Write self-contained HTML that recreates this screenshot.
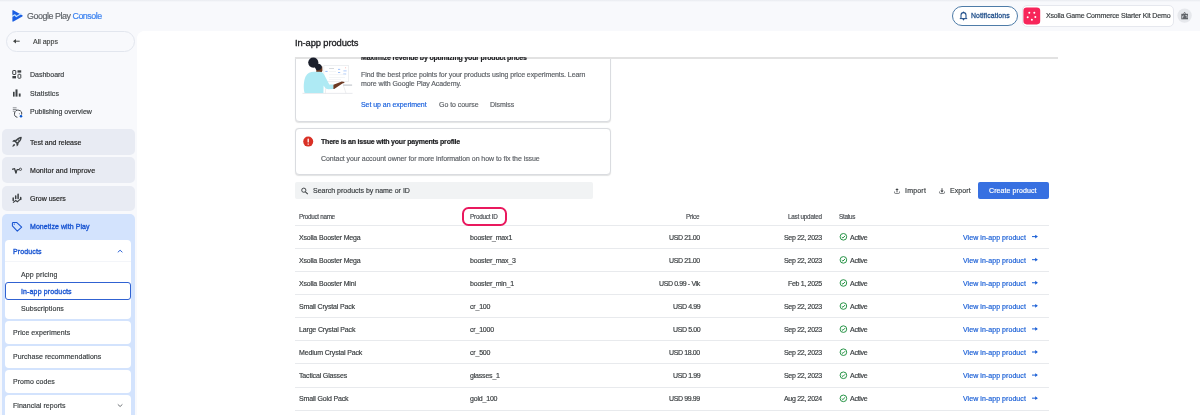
<!DOCTYPE html>
<html><head><meta charset="utf-8">
<style>
html,body{margin:0;padding:0;}
body{width:1200px;height:415px;overflow:hidden;position:relative;background:#f8f9fc;font-family:"Liberation Sans", sans-serif;}
.r{position:absolute;}
.t{position:absolute;white-space:nowrap;line-height:1;will-change:transform;-webkit-text-stroke:0.18px currentColor;}
svg.r{will-change:transform;}
</style></head><body>
<div class="r" style="left:0.00px;top:0.00px;width:1200.00px;height:2.00px;background:linear-gradient(#e9ebf0,#f8f9fc);"></div>
<div class="t" style="left:27.00px;top:11.67px;font-size:8.9px;color:#5f6368;font-weight:400;letter-spacing:-0.45px;">Google Play <span style="color:#3b82f0">Console</span></div>
<div class="r" style="left:6.00px;top:31.00px;width:128.50px;height:20.50px;border:1px solid #e2e6ee;border-radius:11px;box-sizing:border-box;"></div>
<div class="t" style="left:33.00px;top:38.07px;font-size:7px;color:#444746;font-weight:400;letter-spacing:0px;">All apps</div>
<div class="t" style="left:30.00px;top:70.82px;font-size:7px;color:#3c4043;font-weight:400;letter-spacing:0px;">Dashboard</div>
<div class="t" style="left:30.00px;top:89.77px;font-size:7px;color:#3c4043;font-weight:400;letter-spacing:0.1px;">Statistics</div>
<div class="t" style="left:30.00px;top:107.97px;font-size:7px;color:#3c4043;font-weight:400;letter-spacing:0px;">Publishing overview</div>
<div class="r" style="left:2.00px;top:129.00px;width:132.60px;height:26.40px;background:#e8ebf3;border-radius:5px;"></div>
<div class="r" style="left:2.00px;top:157.20px;width:132.60px;height:25.60px;background:#e8ebf3;border-radius:5px;"></div>
<div class="r" style="left:2.00px;top:185.50px;width:132.60px;height:25.50px;background:#e8ebf3;border-radius:5px;"></div>
<div class="r" style="left:2.00px;top:213.50px;width:132.60px;height:216.50px;background:#d3e3fd;border-radius:5px;"></div>
<div class="t" style="left:29.60px;top:138.87px;font-size:7px;color:#1f1f1f;font-weight:400;letter-spacing:0px;">Test and release</div>
<div class="t" style="left:29.60px;top:166.87px;font-size:7px;color:#1f1f1f;font-weight:400;letter-spacing:0.07px;">Monitor and improve</div>
<div class="t" style="left:29.60px;top:194.87px;font-size:7px;color:#1f1f1f;font-weight:400;letter-spacing:0px;">Grow users</div>
<div class="t" style="left:29.60px;top:223.07px;font-size:7px;color:#1a56d2;font-weight:400;letter-spacing:0.07px;-webkit-text-stroke:0.34px #1a56d2;">Monetize with Play</div>
<div class="r" style="left:5.40px;top:240.00px;width:125.20px;height:79.00px;background:#fff;border-radius:4px;"></div>
<div class="t" style="left:13.20px;top:248.07px;font-size:7px;color:#1a56d2;font-weight:400;letter-spacing:0.13px;-webkit-text-stroke:0.34px #1a56d2;">Products</div>
<div class="r" style="left:5.40px;top:261.00px;width:125.20px;height:1.00px;background:#f3f5f9;"></div>
<div class="t" style="left:20.60px;top:271.27px;font-size:7px;color:#3c4043;font-weight:400;letter-spacing:0.14px;">App pricing</div>
<div class="r" style="left:4.70px;top:282.40px;width:126.70px;height:17.80px;border:1.5px solid #3062d2;border-radius:3px;box-sizing:border-box;background:#fff;"></div>
<div class="t" style="left:20.60px;top:287.87px;font-size:7px;color:#1a56d2;font-weight:400;letter-spacing:0.14px;-webkit-text-stroke:0.34px #1a56d2;">In-app products</div>
<div class="t" style="left:20.60px;top:304.87px;font-size:7px;color:#3c4043;font-weight:400;letter-spacing:0.07px;">Subscriptions</div>
<div class="r" style="left:5.40px;top:321.10px;width:125.20px;height:22.80px;background:#fff;border-radius:4px;"></div>
<div class="t" style="left:13.00px;top:328.87px;font-size:7px;color:#3c4043;font-weight:400;letter-spacing:0.08px;">Price experiments</div>
<div class="r" style="left:5.40px;top:345.60px;width:125.20px;height:22.70px;background:#fff;border-radius:4px;"></div>
<div class="t" style="left:13.00px;top:353.27px;font-size:7px;color:#3c4043;font-weight:400;letter-spacing:0.05px;">Purchase recommendations</div>
<div class="r" style="left:5.40px;top:370.30px;width:125.20px;height:22.40px;background:#fff;border-radius:4px;"></div>
<div class="t" style="left:13.00px;top:377.67px;font-size:7px;color:#3c4043;font-weight:400;letter-spacing:0.06px;">Promo codes</div>
<div class="r" style="left:5.40px;top:394.70px;width:125.20px;height:35.30px;background:#fff;border-radius:4px;"></div>
<div class="t" style="left:13.00px;top:401.77px;font-size:7px;color:#3c4043;font-weight:400;letter-spacing:0.05px;">Financial reports</div>
<div class="r" style="left:952.00px;top:6.00px;width:66.00px;height:19.70px;border:1px solid #4e7ca8;border-radius:10px;box-sizing:border-box;background:#fff;"></div>
<div class="t" style="left:971.00px;top:12.56px;font-size:6.9px;color:#1f4e8a;font-weight:400;letter-spacing:0.09px;-webkit-text-stroke:0.28px #1f4e8a;">Notifications</div>
<div class="r" style="left:1021.60px;top:5.00px;width:152.40px;height:21.60px;border:1px solid #e6e8ee;border-radius:5px;box-sizing:border-box;background:#fff;"></div>
<div class="t" style="left:1045.80px;top:12.37px;font-size:7px;color:#3c4043;font-weight:400;letter-spacing:-0.15px;">Xsolla Game Commerce Starter Kit Demo</div>
<div class="r" style="left:137.00px;top:31.00px;width:1063.00px;height:389.00px;background:#fff;border-top-left-radius:8px;"></div>
<div class="r" style="left:294.50px;top:40.00px;width:316.00px;height:81.50px;border:1px solid #dadce0;border-radius:4px;box-sizing:border-box;background:#fff;box-shadow:0 0.5px 1px rgba(60,64,67,0.15);z-index:1;"></div>
<svg class="r" style="left:0;top:0;z-index:3" width="1200" height="415" viewBox="0 0 1200 415">
<line x1="302.5" y1="93.4" x2="352.5" y2="93.4" stroke="#e3e5e8" stroke-width="0.8"/>
<rect x="323.9" y="65.6" width="24.7" height="16.1" fill="#fff" stroke="#e6e8eb" stroke-width="0.7"/>
<rect x="329" y="68.1" width="5" height="0.9" fill="#d3d6da"/>
<rect x="325.3" y="70.9" width="2.3" height="0.9" fill="#8ab4f8"/>
<rect x="338" y="68.9" width="2.2" height="0.8" fill="#8ab4f8"/>
<rect x="343.4" y="70.4" width="3.2" height="1" fill="#aecbfa"/>
<rect x="338" y="72.2" width="2.2" height="0.8" fill="#8ab4f8"/>
<rect x="343.2" y="73.5" width="3" height="1" fill="#aecbfa"/>
<rect x="329" y="71" width="7" height="0.6" fill="#eceef1"/>
<rect x="329" y="74.5" width="16" height="0.6" fill="#eceef1"/>
<rect x="329" y="77" width="16" height="0.6" fill="#eceef1"/>
<rect x="329" y="79.3" width="12" height="0.6" fill="#eceef1"/>
<circle cx="345.6" cy="67.8" r="0.5" fill="#f6aea9"/>
<path d="M326 81.7 L325.4 93.3 M343.6 86 L346 93.3" stroke="#e0e2e6" stroke-width="0.6"/>
<rect x="343" y="84.3" width="9.1" height="1.7" fill="#d5d8dc"/>
<path d="M316.5 66 L322.3 66.5 L322.4 71 L320.8 73 L316.2 72.5 Z" fill="#6d3a23"/>
<path d="M304.6 93 C303.2 88 303.6 81 305.6 76.5 C307.4 73 310.5 71.8 314 71.8 L319.6 71.8 C322.3 72 323.4 73 324.6 75.6 L329.3 84.6 L333.6 84.6 L333.6 89 L328.3 89.2 C326.8 89.2 325.6 88.4 324.8 87.2 L323.6 85.4 L323.4 93 Z" fill="#aeeaf4"/>
<path d="M333.4 84.7 L341.8 81.6 L344.6 81.9 L344.1 82.9 L342.4 83.6 L334.2 89 L333.4 89 Z" fill="#6d3a23"/>
<circle cx="313.3" cy="62.6" r="5.1" fill="#1a1f2c"/>
<path d="M313.5 65 C316 63.3 319.5 63.5 321.2 65.2 C322.2 66.5 322 68.2 320.6 69.2 C319.2 70.4 317.4 70.6 316.3 70 Z" fill="#1a1f2c"/>
</svg>
<div class="t" style="left:361.00px;top:54.07px;font-size:7px;color:#202124;font-weight:700;letter-spacing:-0.18px;z-index:3;">Maximize revenue by optimizing your product prices</div>
<div class="t" style="left:361.00px;top:71.07px;font-size:7px;color:#5f6368;font-weight:400;letter-spacing:-0.08px;z-index:3;">Find the best price points for your products using price experiments. Learn</div>
<div class="t" style="left:361.00px;top:80.47px;font-size:7px;color:#5f6368;font-weight:400;letter-spacing:-0.08px;z-index:3;">more with Google Play Academy.</div>
<div class="t" style="left:361.00px;top:101.07px;font-size:7px;color:#1b62dd;font-weight:400;letter-spacing:-0.05px;z-index:3;">Set up an experiment</div>
<div class="t" style="left:438.60px;top:101.07px;font-size:7px;color:#5f6368;font-weight:400;letter-spacing:-0.05px;z-index:3;">Go to course</div>
<div class="t" style="left:490.30px;top:101.07px;font-size:7px;color:#5f6368;font-weight:400;letter-spacing:-0.05px;z-index:3;">Dismiss</div>
<div class="r" style="left:294.50px;top:128.30px;width:316.00px;height:46.50px;border:1px solid #dadce0;border-radius:4px;box-sizing:border-box;background:#fff;box-shadow:0 0.5px 1px rgba(60,64,67,0.15);z-index:1;"></div>
<div class="t" style="left:321.20px;top:137.87px;font-size:7px;color:#202124;font-weight:700;letter-spacing:-0.2px;z-index:3;">There is an issue with your payments profile</div>
<div class="t" style="left:321.20px;top:155.37px;font-size:7px;color:#5f6368;font-weight:400;letter-spacing:-0.06px;z-index:3;">Contact your account owner for more information on how to fix the issue</div>
<div class="r" style="left:137.00px;top:31.00px;width:1063.00px;height:25.80px;background:#fff;z-index:4;border-top-left-radius:8px;"></div>
<div class="t" style="left:295.00px;top:38.04px;font-size:9.4px;color:#202124;font-weight:400;letter-spacing:-0.12px;z-index:5;-webkit-text-stroke:0.3px #202124;">In-app products</div>
<div class="r" style="left:295.00px;top:57.00px;width:763.20px;height:2.00px;background:#e2e2e2;z-index:2;"></div>
<div class="r" style="left:295.00px;top:182.30px;width:298.00px;height:16.30px;background:#f1f3f4;border-radius:2px;"></div>
<div class="t" style="left:312.80px;top:187.07px;font-size:7px;color:#3c4043;font-weight:400;letter-spacing:0px;">Search products by name or ID</div>
<div class="t" style="left:904.70px;top:187.07px;font-size:7px;color:#3c4043;font-weight:400;letter-spacing:0.2px;">Import</div>
<div class="t" style="left:949.70px;top:187.07px;font-size:7px;color:#3c4043;font-weight:400;letter-spacing:0.1px;">Export</div>
<div class="r" style="left:978.20px;top:182.00px;width:70.50px;height:16.80px;background:#3770e1;border-radius:2px;"></div>
<div class="t" style="left:989.00px;top:187.07px;font-size:7px;color:#fff;font-weight:400;letter-spacing:0.09px;">Create product</div>
<div class="t" style="left:298.70px;top:213.67px;font-size:6.3px;color:#4a4e53;font-weight:400;letter-spacing:-0.28px;">Product name</div>
<div class="t" style="left:470.00px;top:213.67px;font-size:6.3px;color:#4a4e53;font-weight:400;letter-spacing:-0.21px;">Product ID</div>
<div class="t" style="right:500.20px;top:213.67px;font-size:6.3px;color:#4a4e53;font-weight:400;letter-spacing:-0.2px;">Price</div>
<div class="t" style="right:378.00px;top:213.67px;font-size:6.3px;color:#4a4e53;font-weight:400;letter-spacing:-0.22px;">Last updated</div>
<div class="t" style="left:839.30px;top:213.67px;font-size:6.3px;color:#4a4e53;font-weight:400;letter-spacing:-0.28px;">Status</div>
<div class="r" style="left:295.00px;top:225.00px;width:753.60px;height:1.00px;background:#e8eaed;"></div>
<div class="r" style="left:462.00px;top:207.20px;width:44.80px;height:19.30px;border:2px solid #e9195e;border-radius:6.5px;box-sizing:border-box;z-index:2;"></div>
<div class="t" style="left:298.70px;top:233.67px;font-size:7px;color:#3c4043;font-weight:400;letter-spacing:-0.16px;">Xsolla Booster Mega</div>
<div class="t" style="left:470.00px;top:233.67px;font-size:7px;color:#3c4043;font-weight:400;letter-spacing:-0.19px;">booster_max1</div>
<div class="t" style="right:499.90px;top:233.67px;font-size:7px;color:#3c4043;font-weight:400;letter-spacing:-0.38px;">USD 21.00</div>
<div class="t" style="right:378.00px;top:233.67px;font-size:7px;color:#3c4043;font-weight:400;letter-spacing:-0.31px;">Sep 22, 2023</div>
<div class="t" style="left:849.80px;top:233.67px;font-size:7px;color:#3c4043;font-weight:400;letter-spacing:-0.27px;">Active</div>
<div class="t" style="left:963.00px;top:233.67px;font-size:7px;color:#1a5fd6;font-weight:400;letter-spacing:0.06px;">View in-app product</div>
<div class="r" style="left:295.00px;top:248.08px;width:753.60px;height:1.00px;background:#e8eaed;"></div>
<div class="t" style="left:298.70px;top:256.75px;font-size:7px;color:#3c4043;font-weight:400;letter-spacing:-0.16px;">Xsolla Booster Mega</div>
<div class="t" style="left:470.00px;top:256.75px;font-size:7px;color:#3c4043;font-weight:400;letter-spacing:-0.19px;">booster_max_3</div>
<div class="t" style="right:499.90px;top:256.75px;font-size:7px;color:#3c4043;font-weight:400;letter-spacing:-0.38px;">USD 21.00</div>
<div class="t" style="right:378.00px;top:256.75px;font-size:7px;color:#3c4043;font-weight:400;letter-spacing:-0.31px;">Sep 22, 2023</div>
<div class="t" style="left:849.80px;top:256.75px;font-size:7px;color:#3c4043;font-weight:400;letter-spacing:-0.27px;">Active</div>
<div class="t" style="left:963.00px;top:256.75px;font-size:7px;color:#1a5fd6;font-weight:400;letter-spacing:0.06px;">View in-app product</div>
<div class="r" style="left:295.00px;top:271.16px;width:753.60px;height:1.00px;background:#e8eaed;"></div>
<div class="t" style="left:298.70px;top:279.83px;font-size:7px;color:#3c4043;font-weight:400;letter-spacing:-0.16px;">Xsolla Booster Mini</div>
<div class="t" style="left:470.00px;top:279.83px;font-size:7px;color:#3c4043;font-weight:400;letter-spacing:-0.19px;">booster_min_1</div>
<div class="t" style="right:499.90px;top:279.83px;font-size:7px;color:#3c4043;font-weight:400;letter-spacing:-0.38px;">USD 0.99 - Vik</div>
<div class="t" style="right:378.00px;top:279.83px;font-size:7px;color:#3c4043;font-weight:400;letter-spacing:-0.31px;">Feb 1, 2025</div>
<div class="t" style="left:849.80px;top:279.83px;font-size:7px;color:#3c4043;font-weight:400;letter-spacing:-0.27px;">Active</div>
<div class="t" style="left:963.00px;top:279.83px;font-size:7px;color:#1a5fd6;font-weight:400;letter-spacing:0.06px;">View in-app product</div>
<div class="r" style="left:295.00px;top:294.24px;width:753.60px;height:1.00px;background:#e8eaed;"></div>
<div class="t" style="left:298.70px;top:302.91px;font-size:7px;color:#3c4043;font-weight:400;letter-spacing:-0.16px;">Small Crystal Pack</div>
<div class="t" style="left:470.00px;top:302.91px;font-size:7px;color:#3c4043;font-weight:400;letter-spacing:-0.19px;">cr_100</div>
<div class="t" style="right:499.90px;top:302.91px;font-size:7px;color:#3c4043;font-weight:400;letter-spacing:-0.38px;">USD 4.99</div>
<div class="t" style="right:378.00px;top:302.91px;font-size:7px;color:#3c4043;font-weight:400;letter-spacing:-0.31px;">Sep 22, 2023</div>
<div class="t" style="left:849.80px;top:302.91px;font-size:7px;color:#3c4043;font-weight:400;letter-spacing:-0.27px;">Active</div>
<div class="t" style="left:963.00px;top:302.91px;font-size:7px;color:#1a5fd6;font-weight:400;letter-spacing:0.06px;">View in-app product</div>
<div class="r" style="left:295.00px;top:317.32px;width:753.60px;height:1.00px;background:#e8eaed;"></div>
<div class="t" style="left:298.70px;top:325.99px;font-size:7px;color:#3c4043;font-weight:400;letter-spacing:-0.16px;">Large Crystal Pack</div>
<div class="t" style="left:470.00px;top:325.99px;font-size:7px;color:#3c4043;font-weight:400;letter-spacing:-0.19px;">cr_1000</div>
<div class="t" style="right:499.90px;top:325.99px;font-size:7px;color:#3c4043;font-weight:400;letter-spacing:-0.38px;">USD 5.00</div>
<div class="t" style="right:378.00px;top:325.99px;font-size:7px;color:#3c4043;font-weight:400;letter-spacing:-0.31px;">Sep 22, 2023</div>
<div class="t" style="left:849.80px;top:325.99px;font-size:7px;color:#3c4043;font-weight:400;letter-spacing:-0.27px;">Active</div>
<div class="t" style="left:963.00px;top:325.99px;font-size:7px;color:#1a5fd6;font-weight:400;letter-spacing:0.06px;">View in-app product</div>
<div class="r" style="left:295.00px;top:340.40px;width:753.60px;height:1.00px;background:#e8eaed;"></div>
<div class="t" style="left:298.70px;top:349.07px;font-size:7px;color:#3c4043;font-weight:400;letter-spacing:-0.16px;">Medium Crystal Pack</div>
<div class="t" style="left:470.00px;top:349.07px;font-size:7px;color:#3c4043;font-weight:400;letter-spacing:-0.19px;">cr_500</div>
<div class="t" style="right:499.90px;top:349.07px;font-size:7px;color:#3c4043;font-weight:400;letter-spacing:-0.38px;">USD 18.00</div>
<div class="t" style="right:378.00px;top:349.07px;font-size:7px;color:#3c4043;font-weight:400;letter-spacing:-0.31px;">Sep 22, 2023</div>
<div class="t" style="left:849.80px;top:349.07px;font-size:7px;color:#3c4043;font-weight:400;letter-spacing:-0.27px;">Active</div>
<div class="t" style="left:963.00px;top:349.07px;font-size:7px;color:#1a5fd6;font-weight:400;letter-spacing:0.06px;">View in-app product</div>
<div class="r" style="left:295.00px;top:363.48px;width:753.60px;height:1.00px;background:#e8eaed;"></div>
<div class="t" style="left:298.70px;top:372.15px;font-size:7px;color:#3c4043;font-weight:400;letter-spacing:-0.16px;">Tactical Glasses</div>
<div class="t" style="left:470.00px;top:372.15px;font-size:7px;color:#3c4043;font-weight:400;letter-spacing:-0.19px;">glasses_1</div>
<div class="t" style="right:499.90px;top:372.15px;font-size:7px;color:#3c4043;font-weight:400;letter-spacing:-0.38px;">USD 1.99</div>
<div class="t" style="right:378.00px;top:372.15px;font-size:7px;color:#3c4043;font-weight:400;letter-spacing:-0.31px;">Sep 22, 2023</div>
<div class="t" style="left:849.80px;top:372.15px;font-size:7px;color:#3c4043;font-weight:400;letter-spacing:-0.27px;">Active</div>
<div class="t" style="left:963.00px;top:372.15px;font-size:7px;color:#1a5fd6;font-weight:400;letter-spacing:0.06px;">View in-app product</div>
<div class="r" style="left:295.00px;top:386.56px;width:753.60px;height:1.00px;background:#e8eaed;"></div>
<div class="t" style="left:298.70px;top:395.23px;font-size:7px;color:#3c4043;font-weight:400;letter-spacing:-0.16px;">Small Gold Pack</div>
<div class="t" style="left:470.00px;top:395.23px;font-size:7px;color:#3c4043;font-weight:400;letter-spacing:-0.19px;">gold_100</div>
<div class="t" style="right:499.90px;top:395.23px;font-size:7px;color:#3c4043;font-weight:400;letter-spacing:-0.38px;">USD 99.99</div>
<div class="t" style="right:378.00px;top:395.23px;font-size:7px;color:#3c4043;font-weight:400;letter-spacing:-0.31px;">Aug 22, 2024</div>
<div class="t" style="left:849.80px;top:395.23px;font-size:7px;color:#3c4043;font-weight:400;letter-spacing:-0.27px;">Active</div>
<div class="t" style="left:963.00px;top:395.23px;font-size:7px;color:#1a5fd6;font-weight:400;letter-spacing:0.06px;">View in-app product</div>
<div class="r" style="left:295.00px;top:409.64px;width:753.60px;height:1.00px;background:#e8eaed;"></div>
<svg class="r" style="left:0;top:0;z-index:10;pointer-events:none" width="1200" height="415" viewBox="0 0 1200 415">
<path d="M13.3 10.2 Q12.4 9.8 12.4 10.9 V20.9 Q12.4 22 13.4 21.5 L22.3 16.5 Q23.2 15.9 22.3 15.3 Z" fill="#1b5fe3"/>
<path d="M12 16.4 L14.9 14.8 L16.3 16.5 L21.4 13.5" stroke="#c4e4ff" stroke-width="1.25" fill="none" stroke-linejoin="round"/>
<path d="M19.7 41.2 H14" stroke="#444746" stroke-width="1"/>
<path d="M16 39 L13 41.2 L16 43.4 Z" fill="#444746"/>
<rect x="12.75" y="70.5" width="3" height="4" rx="0.5" fill="none" stroke="#3c4043" stroke-width="1"/>
<rect x="17.5" y="70.3" width="3.7" height="2.3" fill="#3c4043"/>
<rect x="12.4" y="76" width="3.6" height="2.4" fill="#3c4043"/>
<rect x="18" y="74.3" width="2.8" height="3.9" rx="0.5" fill="none" stroke="#3c4043" stroke-width="1"/>
<rect x="13" y="91.8" width="1.6" height="4.8" fill="#3c4043"/>
<rect x="15.5" y="89.4" width="2" height="7.2" fill="#3c4043"/>
<rect x="18.8" y="93.5" width="1.8" height="3.1" fill="#3c4043"/>
<path d="M12.8 107.8 H16.6 M12.8 109.5 H16.6 M12.8 111.2 H14.6" stroke="#5f6368" stroke-width="0.7"/>
<path d="M21.6 114.6 A3.6 3.6 0 1 0 17.4 117.3" stroke="#3c4043" stroke-width="0.95" fill="none"/>
<circle cx="19.4" cy="113.7" r="0.5" fill="#5f6368"/>
<circle cx="21" cy="116.3" r="1.25" fill="#0b57d0"/>
<path d="M21.1 137.3 C18.6 137.6 16.7 139.3 15.3 141.6 L17 143.3 C19.3 141.9 20.9 140 21.1 137.3 Z" fill="none" stroke="#3c4043" stroke-width="1.35" stroke-linejoin="round"/>
<circle cx="18.5" cy="139.9" r="0.75" fill="#3c4043"/>
<path d="M16.1 139.8 L13.6 140.1 L12.1 141.6 L14.7 142 Z" fill="#3c4043"/>
<path d="M18.6 142.5 L18.3 145 L16.8 146.5 L16.4 143.9 Z" fill="#3c4043"/>
<path d="M14.4 144 C13.3 144.3 12.6 145.2 12.3 146.8 C13.9 146.6 14.8 145.8 15.1 144.8 Z" fill="#3c4043"/>
<path d="M12.1 169.4 L14.6 168.7 L15.9 172.9 L17.1 169.6 H19.2" stroke="#3c4043" stroke-width="1.2" fill="none" stroke-linejoin="round"/>
<path d="M15.3 170.4 L16.2 173.4" stroke="#3c4043" stroke-width="1.4"/>
<circle cx="20.4" cy="169.3" r="1.15" stroke="#3c4043" stroke-width="0.9" fill="none"/>
<path d="M13.2 198 V200.6 M15.7 196.1 V198.4 M18.1 194.2 V198.4 M20.7 197.5 V199.2" stroke="#3c4043" stroke-width="1.5" stroke-linecap="round"/>
<path d="M13 202.6 L15.7 200.5 L17.4 201.7 L19.8 199.7 L21.2 198.7" stroke="#3c4043" stroke-width="1.1" fill="none"/>
<path d="M12.4 223.2 Q12.4 222.4 13.2 222.4 H16.6 L21.7 227.2 L17.3 231.1 L12.4 225.8 Z" stroke="#1a56d2" stroke-width="1.05" fill="none" stroke-linejoin="round"/>
<circle cx="14.3" cy="224.1" r="0.7" fill="#1a56d2"/>
<path d="M117.8 252.3 L120.1 250.2 L122.4 252.3" stroke="#1a56d2" stroke-width="0.9" fill="none"/>
<path d="M117.8 404.4 L120.1 406.5 L122.4 404.4" stroke="#5f6368" stroke-width="0.9" fill="none"/>
<path d="M961 18.3 V15.2 C961 13.6 962 12.6 963.5 12.6 C965 12.6 966 13.6 966 15.2 V18.3" stroke="#1f4e8a" stroke-width="1.05" fill="none"/>
<path d="M959.8 18.6 H967.2" stroke="#1f4e8a" stroke-width="1"/>
<path d="M962.4 19 L963.5 20.7 L964.6 19 Z" fill="#1f4e8a"/>
<circle cx="963.5" cy="12.2" r="0.7" fill="#1f4e8a"/>
<rect x="1023.4" y="7.4" width="16.8" height="17" rx="3.3" fill="#f7255a"/>
<circle cx="1029.3" cy="12.7" r="1" fill="#fff"/><circle cx="1034.3" cy="12.7" r="1" fill="#fff"/>
<circle cx="1027.7" cy="17.2" r="1" fill="#fff"/><circle cx="1035.3" cy="16.9" r="1" fill="#fff"/>
<circle cx="1031.9" cy="19.8" r="1" fill="#fff"/>
<circle cx="1184.6" cy="15.6" r="7.2" fill="#e6e8ec"/>
<path d="M1181.3 13.8 H1188 V19.3 H1181.3 Z" fill="#5f6368"/>
<path d="M1183.6 13.9 L1184.6 12.2 L1185.6 13.9" fill="none" stroke="#5f6368" stroke-width="0.8"/>
<path d="M1182.6 18.3 V16 H1184 M1185.4 15.5 H1187 V18" fill="none" stroke="#e6e8ec" stroke-width="0.7"/>
<circle cx="308.2" cy="141.6" r="5" fill="#d93025"/>
<rect x="307.55" y="138.6" width="1.3" height="3.9" rx="0.4" fill="#fff"/>
<rect x="307.55" y="143.4" width="1.3" height="1.3" rx="0.4" fill="#fff"/>
<circle cx="303.8" cy="190.2" r="2.1" stroke="#3c4043" stroke-width="0.95" fill="none"/>
<path d="M305.4 191.8 L307.8 194.1" stroke="#3c4043" stroke-width="1.05"/>
<path d="M895.3 190 L897 188.2 L898.7 190 Z" fill="#3c4043"/>
<path d="M897 189.6 V192.2" stroke="#3c4043" stroke-width="0.9"/>
<path d="M894.5 191.5 V192.6 Q894.5 193.4 895.3 193.4 H898.7 Q899.5 193.4 899.5 192.6 V191.5" stroke="#54585d" stroke-width="0.8" fill="none"/>
<path d="M940.3 190.6 L942 192.4 L943.7 190.6 Z" fill="#3c4043"/>
<path d="M942 188.2 V191" stroke="#3c4043" stroke-width="0.9"/>
<path d="M939.5 191.5 V192.6 Q939.5 193.4 940.3 193.4 H943.7 Q944.5 193.4 944.5 192.6 V191.5" stroke="#54585d" stroke-width="0.8" fill="none"/>
<circle cx="843.4" cy="236.80" r="3.3" stroke="#1e8e3e" stroke-width="0.95" fill="none"/>
<path d="M841.8 237.10 L842.9 238.00 L845.1 235.80" stroke="#1e8e3e" stroke-width="1" fill="none"/>
<path d="M1032 236.60 H1036.2" stroke="#1a5fd6" stroke-width="1"/>
<path d="M1035.2 234.70 L1037.9 236.60 L1035.2 238.50 Z" fill="#1a5fd6"/>
<circle cx="843.4" cy="259.88" r="3.3" stroke="#1e8e3e" stroke-width="0.95" fill="none"/>
<path d="M841.8 260.18 L842.9 261.08 L845.1 258.88" stroke="#1e8e3e" stroke-width="1" fill="none"/>
<path d="M1032 259.68 H1036.2" stroke="#1a5fd6" stroke-width="1"/>
<path d="M1035.2 257.78 L1037.9 259.68 L1035.2 261.58 Z" fill="#1a5fd6"/>
<circle cx="843.4" cy="282.96" r="3.3" stroke="#1e8e3e" stroke-width="0.95" fill="none"/>
<path d="M841.8 283.26 L842.9 284.16 L845.1 281.96" stroke="#1e8e3e" stroke-width="1" fill="none"/>
<path d="M1032 282.76 H1036.2" stroke="#1a5fd6" stroke-width="1"/>
<path d="M1035.2 280.86 L1037.9 282.76 L1035.2 284.66 Z" fill="#1a5fd6"/>
<circle cx="843.4" cy="306.04" r="3.3" stroke="#1e8e3e" stroke-width="0.95" fill="none"/>
<path d="M841.8 306.34 L842.9 307.24 L845.1 305.04" stroke="#1e8e3e" stroke-width="1" fill="none"/>
<path d="M1032 305.84 H1036.2" stroke="#1a5fd6" stroke-width="1"/>
<path d="M1035.2 303.94 L1037.9 305.84 L1035.2 307.74 Z" fill="#1a5fd6"/>
<circle cx="843.4" cy="329.12" r="3.3" stroke="#1e8e3e" stroke-width="0.95" fill="none"/>
<path d="M841.8 329.42 L842.9 330.32 L845.1 328.12" stroke="#1e8e3e" stroke-width="1" fill="none"/>
<path d="M1032 328.92 H1036.2" stroke="#1a5fd6" stroke-width="1"/>
<path d="M1035.2 327.02 L1037.9 328.92 L1035.2 330.82 Z" fill="#1a5fd6"/>
<circle cx="843.4" cy="352.20" r="3.3" stroke="#1e8e3e" stroke-width="0.95" fill="none"/>
<path d="M841.8 352.50 L842.9 353.40 L845.1 351.20" stroke="#1e8e3e" stroke-width="1" fill="none"/>
<path d="M1032 352.00 H1036.2" stroke="#1a5fd6" stroke-width="1"/>
<path d="M1035.2 350.10 L1037.9 352.00 L1035.2 353.90 Z" fill="#1a5fd6"/>
<circle cx="843.4" cy="375.28" r="3.3" stroke="#1e8e3e" stroke-width="0.95" fill="none"/>
<path d="M841.8 375.58 L842.9 376.48 L845.1 374.28" stroke="#1e8e3e" stroke-width="1" fill="none"/>
<path d="M1032 375.08 H1036.2" stroke="#1a5fd6" stroke-width="1"/>
<path d="M1035.2 373.18 L1037.9 375.08 L1035.2 376.98 Z" fill="#1a5fd6"/>
<circle cx="843.4" cy="398.36" r="3.3" stroke="#1e8e3e" stroke-width="0.95" fill="none"/>
<path d="M841.8 398.66 L842.9 399.56 L845.1 397.36" stroke="#1e8e3e" stroke-width="1" fill="none"/>
<path d="M1032 398.16 H1036.2" stroke="#1a5fd6" stroke-width="1"/>
<path d="M1035.2 396.26 L1037.9 398.16 L1035.2 400.06 Z" fill="#1a5fd6"/>
</svg>
</body></html>
